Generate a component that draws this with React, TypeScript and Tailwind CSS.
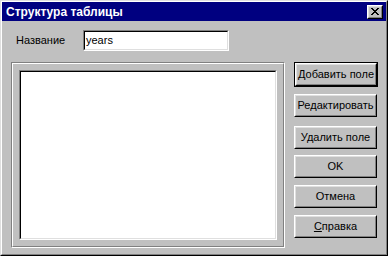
import React from 'react';

const raised =
  'border border-t-white border-l-white border-r-black border-b-black';
const raisedInner =
  'border border-t-[#dfdfdf] border-l-[#dfdfdf] border-r-[#808080] border-b-[#808080]';

function CloseGlyph() {
  const rows = ['11000011', '01100110', '00111100', '00011000', '00111100', '01100110', '11000011'];
  return (
    <svg width="8" height="7" viewBox="0 0 8 7" shapeRendering="crispEdges">
      {rows.map((r, y) =>
        r.split('').map((c, x) => (c === '1' ? <rect key={`${x}-${y}`} x={x} y={y} width="1" height="1" fill="#000" /> : null))
      )}
    </svg>
  );
}

function Button({ children, isDefault }: { children: React.ReactNode; isDefault?: boolean }) {
  const body = (
    <div className={`${raised} h-full w-full`}>
      <div className={`${raisedInner} h-full w-full flex items-center justify-center text-[11px] text-black bg-[#c0c0c0]`}>
        {children}
      </div>
    </div>
  );
  if (isDefault) {
    return <div className="w-[84px] h-[25px] border border-black">{body}</div>;
  }
  return <div className="w-[83px] h-[23px]">{body}</div>;
}

export default function App() {
  return (
    <div
      className="w-[388px] h-[256px] border border-t-[#dfdfdf] border-l-[#dfdfdf] border-r-black border-b-black"
      style={{ fontFamily: '"Liberation Sans", Arial, sans-serif' }}
    >
      <div className="h-full border border-t-white border-l-white border-r-[#808080] border-b-[#808080] bg-[#c0c0c0] flex flex-col">
        {/* title bar */}
        <div className="h-[19px] bg-[#000080] flex items-center justify-between pl-[4px] pr-[3px]">
          <span className="text-white font-bold text-[12px] leading-none">Структура таблицы</span>
          <div className={`${raised} w-[16px] h-[14px]`}>
            <div className={`${raisedInner} w-full h-full bg-[#c0c0c0] flex items-center justify-center`}>
              <CloseGlyph />
            </div>
          </div>
        </div>

        {/* name row */}
        <div className="flex items-center mt-[9px] pl-[14px]">
          <span className="text-[11px] text-black w-[67px]">Название</span>
          <div className="w-[146px] h-[21px] border border-t-[#808080] border-l-[#808080] border-r-white border-b-white">
            <div className="h-full border border-t-black border-l-black border-r-[#dfdfdf] border-b-[#dfdfdf] bg-white flex items-center pl-[1px]">
              <span className="text-[11px] text-black">years</span>
            </div>
          </div>
        </div>

        {/* main */}
        <div className="flex mt-[11px] pl-[9px]">
          <div className="w-[274px] h-[186px] border border-t-[#808080] border-l-[#808080] border-r-white border-b-white">
            <div className="h-full border border-t-white border-l-white border-r-[#808080] border-b-[#808080] p-[6px]">
              <div className="h-full border border-t-[#808080] border-l-[#808080] border-r-white border-b-white">
                <div className="h-full border border-t-black border-l-black border-r-[#dfdfdf] border-b-[#dfdfdf] bg-white" />
              </div>
            </div>
          </div>

          <div className="flex flex-col ml-[9px]">
            <Button isDefault>Добавить поле</Button>
            <div className="mt-[7px]">
              <Button>Редактировать</Button>
            </div>
            <div className="mt-[9px]">
              <Button>Удалить поле</Button>
            </div>
            <div className="mt-[6px]">
              <Button>OK</Button>
            </div>
            <div className="mt-[7px]">
              <Button>Отмена</Button>
            </div>
            <div className="mt-[7px]">
              <Button>
                <span>
                  <u>С</u>правка
                </span>
              </Button>
            </div>
          </div>
        </div>
      </div>
    </div>
  );
}
